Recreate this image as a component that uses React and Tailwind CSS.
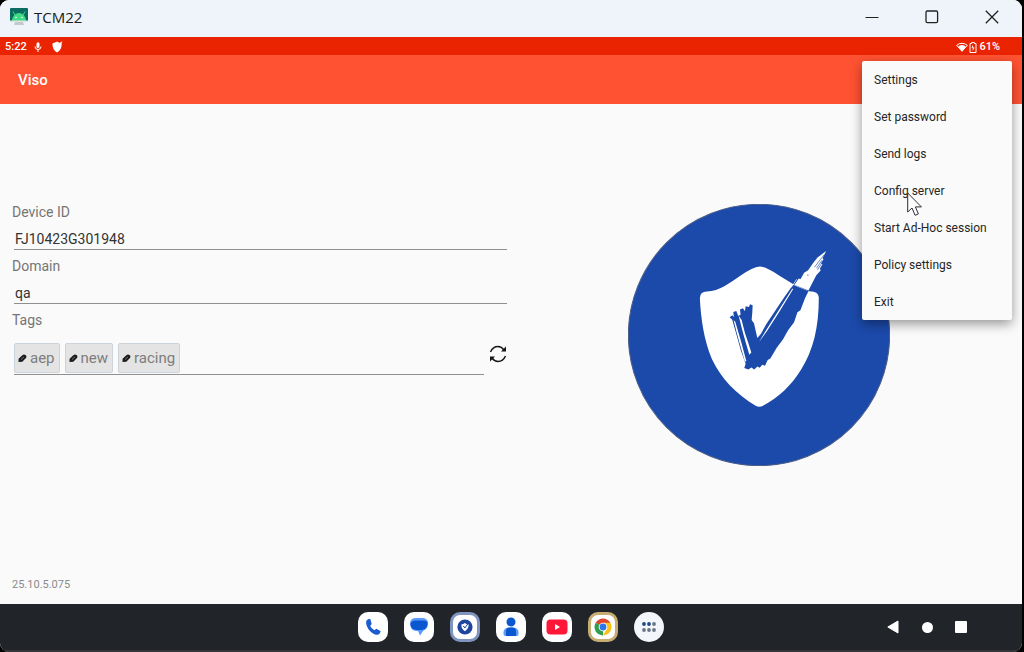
const menuItems = [
  'Settings',
  'Set password',
  'Send logs',
  'Config server',
  'Start Ad-Hoc session',
  'Policy settings',
  'Exit',
];

const tags = ['aep', 'new', 'racing'];

const DeviceIcon = () => (
  <svg width="18" height="18" viewBox="0 0 18 18" aria-hidden="true">
    <path d="M1 0h16a1 1 0 0 1 1 1v12H0V1a1 1 0 0 1 1-1z" fill="#0b6b60" />
    <path d="M2 13c0-4 3-8 7-8s7 4 7 8z" fill="#3ddc84" />
    <path d="M5 7 3 3.500M13 7l2-3.500" stroke="#3ddc84" strokeWidth="1" />
    <circle cx="6" cy="9.500" r="0.8" fill="#fff" />
    <circle cx="12" cy="9.500" r="0.8" fill="#fff" />
    <path d="M0 12.500h18V14H0z" fill="#dfe3e5" />
    <path d="M5 14h8l1 3H4z" fill="#c3c8ca" />
  </svg>
);

const TitleBar = () => (
  <header className="flex h-[37px] items-center justify-between bg-[#eef4f9] pb-[3px] pl-[10px]">
    <div className="flex items-center gap-[6px]">
      <DeviceIcon />
      <h1 className="font-['Open_Sans',sans-serif] text-[15px] leading-5 text-[#1b1b1b]">TCM22</h1>
    </div>
    <div className="flex h-full">
      <button aria-label="Minimize" className="flex w-[60px] items-center justify-center">
        <svg width="14" height="14" viewBox="0 0 14 14"><path d="M0.5 7.5h13" stroke="#222" strokeWidth="1.2" /></svg>
      </button>
      <button aria-label="Maximize" className="flex w-[60px] items-center justify-center">
        <svg width="14" height="14" viewBox="0 0 14 14"><rect x="1" y="1" width="11.6" height="11.6" rx="1.4" fill="none" stroke="#222" strokeWidth="1.3" /></svg>
      </button>
      <button aria-label="Close" className="flex w-[60px] items-center justify-center">
        <svg width="14" height="14" viewBox="0 0 14 14"><path d="M0.8 0.8 13.2 13.2M13.2 0.8 0.8 13.2" stroke="#222" strokeWidth="1.3" /></svg>
      </button>
    </div>
  </header>
);

const StatusBar = () => (
  <div className="flex h-[18px] items-center justify-between bg-[#ea2400] pl-[5px] pr-[22px] pt-[2px] text-[11px] font-medium leading-4 text-white">
    <div className="flex items-center">
      <span>5:22</span>
      <svg className="ml-[7px]" width="8" height="10" viewBox="0 0 8 10" aria-hidden="true">
        <rect x="2.5" y="0.3" width="3" height="5.6" rx="1.5" fill="#fff" />
        <path d="M1 4.5a3 3 0 0 0 6 0M4 7.5V10" stroke="#fff" fill="none" />
      </svg>
      <svg className="ml-[10px]" width="11" height="12" viewBox="0 0 11 12" aria-hidden="true">
        <path d="M0.4 2.5C2.4 2.3 3.6 0.9 5 0.8c1 0 1.8.7 2.8 1.2L10.4 0 9.6 2.4c.3 4-1.500 7.400-4.600 9C2 9.800.2 6.500.4 2.500z" fill="#fff" />
      </svg>
    </div>
    <div className="flex items-center">
      <svg width="12" height="10" viewBox="0 0 12 10" aria-hidden="true">
        <path d="M0.700 3.300a8 8 0 0 1 10.600 0L6 9.300z" fill="none" stroke="#fff" strokeWidth="1" />
        <path d="M2.200 4.600a5.500 5.500 0 0 1 7.600 0L6 9.500z" fill="#fff" />
      </svg>
      <svg className="ml-[1px]" width="8" height="11" viewBox="0 0 8 11" aria-hidden="true">
        <path d="M2.500 1.500V.6h3v.9H7v9H1v-9z" fill="none" stroke="#fff" />
        <path d="M4 3 2.400 5.700h1.300V9l1.900-3.500H4.200z" fill="#fff" />
      </svg>
      <span className="ml-[2px]">61%</span>
    </div>
  </div>
);

const OverflowMenu = () => (
  <div role="menu" className="absolute right-[10px] top-[61px] w-[150px] rounded-[2px] bg-[#fafafa] shadow-[0_4px_12px_rgba(0,0,0,0.4)]">
    {menuItems.map((item) => (
      <button key={item} role="menuitem" className="flex h-[37px] w-full items-center px-3 text-left text-[12px] leading-4 text-[#252525]">
        {item}
      </button>
    ))}
    <svg className="absolute left-[45px] top-[131px]" width="16" height="25" viewBox="0 0 16 25" aria-hidden="true">
      <path d="M0.700 1v19l4.300-4 3.100 7.300 3.300-1.400-3-7h6z" fill="#fdfdfd" stroke="#2b2f36" strokeWidth="1" />
    </svg>
  </div>
);

const Field = ({ id, label, value }) => (
  <div className="mb-[6px]">
    <label htmlFor={id} className="block text-[14px] leading-5 text-[#757575]">{label}</label>
    <div className="pl-[2px]">
      <input
        id={id}
        defaultValue={value}
        className="block h-7 w-full border-b border-[#8f8f8f] pt-[6px] pb-0 pl-[1px] text-[14px] leading-5 text-[#333] outline-none"
      />
    </div>
  </div>
);

const PencilIcon = () => (
  <svg width="9" height="9" viewBox="0 0 9 9" aria-hidden="true">
    <path d="M0.500 8 .6 4.700 4.600.9Q6 .2 7.500 1T8.200 3.700L4.300 7.700z" fill="#1c1c1c" />
    <path d="M3 5.600 6 2.700" stroke="#777" strokeWidth="1" />
  </svg>
);

const TagsField = () => (
  <div>
    <label htmlFor="tags" className="block text-[14px] leading-5 text-[#757575]">Tags</label>
    <div className="mt-[13px] flex items-start pl-[2px]">
      <div className="flex h-8 min-w-0 flex-1 items-start gap-[5px] border-b border-[#8f8f8f]">
        {tags.map((tag) => (
          <button key={tag} className="flex h-[30px] items-center gap-[3px] rounded-[2px] border border-[#cdd4d9] bg-[#e4e4e4] pl-[3px] pr-1 text-[15px] leading-5 text-[#7d7d7d]">
            <PencilIcon />
            {tag}
          </button>
        ))}
        <input id="tags" className="h-[30px] min-w-0 flex-1 outline-none" />
      </div>
      <button aria-label="Refresh tags" className="ml-[5px] mt-[2px]">
        <svg width="18" height="18" viewBox="0 0 18 18" fill="none" stroke="#151515" strokeWidth="1.500">
          <path d="M1.500 7Q4 1.500 9 1.500 12.500 1.500 15 5" />
          <path d="M17 1.500v5h-5z" fill="#151515" stroke="none" />
          <path d="M16.500 11Q14 16.500 9 16.500 5.500 16.500 3 13" />
          <path d="M1 16.500v-5h5z" fill="#151515" stroke="none" />
        </svg>
      </button>
    </div>
  </div>
);

const VisoLogo = () => (
  <svg className="size-[262px]" viewBox="26 28 784 784" role="img" aria-label="Viso">
    <circle cx="418" cy="420" r="391" fill="#1c4aab" stroke="#4a5c86" strokeWidth="3" />
    <path
      d="M262 290C300 289 330 265 362 243Q400 216 420 215Q440 216 478 242L521 268L566 289Q596 288 597 308C597 400 580 465 545 522C515 572 475 608 430 632Q419 638 408 632C350 596 305 552 277 492C253 435 244 370 241 310Q241 291 262 290z"
      fill="#fff"
    />
    <path
      d="M330 367 338 361 343 366 341 351 350 348 356 363 363 359 361 344 370 340 376 349 378 334 388 336 391 328 399 331 398 352 396 375 403 385 413 429 424 416 440 387 465 350 494 306 520 270 566 289 556 309 542 346 533 352 523 382 505 406 490 433 471 458 452 490 444 495 436 512 428 509 420 518 413 514 404 523 395 517 386 523 374 519 378 506 364 467 351 421 338 374z"
      fill="#1c4aab"
    />
    <path d="M342 376 347 380 365 442 380 498 376 500 360 445 351 412zM357 362 366 375 376 414 386 444 395 472 389 479 377 438 368 406z" fill="#fff" />
    <path d="M418 441 440 404 475 349 518 281 520 283 478 352 442 408z" fill="#fff" />
    <path d="M514 278 531 253" stroke="#fff" strokeWidth="2" />
    <path d="M524 270 537 251 542 253 553 234 565 226 579 206 593 188 619 169 608 190 611 193 603 206 608 208 600 222 603 226 589 242 566 287z" fill="#fff" />
    <path d="M612 181 584 217M607 196 590 220M604 208 593 225" stroke="#1c4aab" strokeWidth="2" />
    <circle cx="564" cy="241" r="3" fill="#a9bce0" />
  </svg>
);

const dockTile = 'flex size-[30px] items-center justify-center rounded-[10px]';

const ChromeIcon = () => (
  <svg width="18" height="18" viewBox="0 0 18 18" aria-hidden="true">
    <path d="M9 9 1.640 4.750A8.500 8.500 0 0 1 16.360 4.750z" fill="#e0442f" />
    <path d="M9 9v8.500A8.500 8.500 0 0 1 1.640 4.750z" fill="#2f9e4f" />
    <path d="M9 4.750h7.360A8.500 8.500 0 0 1 9 17.500L12.700 11z" fill="#fbc116" />
    <circle cx="9" cy="9" r="4.300" fill="#fff" />
    <circle cx="9" cy="9" r="3.400" fill="#2f74e8" />
  </svg>
);

const Dock = () => (
  <nav aria-label="Apps" className="flex gap-4">
    <button aria-label="Phone" className={`${dockTile} bg-white`}>
      <svg width="18" height="18" viewBox="0 0 18 18">
        <path d="M4.600 1 3 2Q1.500 3.400 2.600 7.500q2.500 6.500 8.400 9 3 1 4.700-1l1-2.300-4.200-2.500-2.200 1.600Q7.500 10.700 6.200 8l1.500-2L6.300 1z" fill="#1a5bd0" />
      </svg>
    </button>
    <button aria-label="Messages" className={`${dockTile} bg-white`}>
      <svg width="20" height="20" viewBox="0 0 20 20">
        <path d="M7 1h6q6 0 6 5.500Q19 12 14.500 13.500L11 18.500 9 14H7Q1 13 1 6.500 1 1 7 1z" fill="#5c9bfa" />
        <path d="M5.500 3.500h10q3.500.5 3 3.500-.5 5.500-6 6H7.500Q1.500 12.500 1.500 7q.5-3 4-3.500z" fill="#0b57d0" />
      </svg>
    </button>
    <button aria-label="Viso" className={`${dockTile} border-[3px] border-[#8094c0] bg-white`}>
      <svg width="16" height="16" viewBox="0 0 16 16">
        <circle cx="8" cy="8" r="7.600" fill="#1f469f" />
        <path d="M4.300 5.500Q6.500 5 7.800 4q1.500 1 3.900 1.500 0 4-3.700 6.700-3.700-2.200-3.700-6.700z" fill="#fff" />
        <path d="M6.300 6.800 7.800 9 11.500 4" stroke="#1f469f" fill="none" />
      </svg>
    </button>
    <button aria-label="Contacts" className={`${dockTile} bg-white`}>
      <svg width="18" height="20" viewBox="0 0 18 20">
        <circle cx="9" cy="5" r="4.500" fill="#0b57d0" />
        <path d="M1.500 17v-2q.5-4.500 5.500-4.500h4q5 0 5.500 4.500v2q0 2-2 2h-11q-2 0-2-2z" fill="#5c9bfa" />
        <path d="M4 19v-5q0-3.500 4-3.500h2q4 0 4 3.500v5z" fill="#0b57d0" />
      </svg>
    </button>
    <button aria-label="YouTube" className={`${dockTile} bg-white`}>
      <svg width="22" height="16" viewBox="0 0 22 16">
        <rect x="0.500" y="0.500" width="21" height="15" rx="4" fill="#ff1738" />
        <path d="M9 5v6l5-3z" fill="#fff" />
      </svg>
    </button>
    <button aria-label="Chrome" className={`${dockTile} border-[3px] border-[#c8ad73] bg-white`}>
      <ChromeIcon />
    </button>
    <button aria-label="All apps" className="flex size-[30px] items-center justify-center rounded-full bg-[#f3f6fb]">
      <svg width="16" height="12" viewBox="0 0 16 12">
        <circle cx="3" cy="3" r="1.900" fill="#1d4a86" />
        <circle cx="8" cy="3" r="1.900" fill="#1d4a86" />
        <circle cx="13" cy="3" r="1.900" fill="#6b7585" />
        <circle cx="3" cy="9" r="1.900" fill="#6b7585" />
        <circle cx="8" cy="9" r="1.900" fill="#6b7585" />
        <circle cx="13" cy="9" r="1.900" fill="#6b7585" />
      </svg>
    </button>
  </nav>
);

const SystemNav = () => (
  <div className="flex justify-end pr-11">
    <button aria-label="Back" className="flex h-[34px] w-[34px] items-center justify-center">
      <svg width="12" height="14" viewBox="0 0 12 14"><path d="M11 1v12L.8 7z" fill="#fff" stroke="#fff" strokeLinejoin="round" /></svg>
    </button>
    <button aria-label="Home" className="flex h-[34px] w-[34px] items-center justify-center">
      <span className="size-[11px] rounded-full bg-white" />
    </button>
    <button aria-label="Recents" className="flex h-[34px] w-[34px] items-center justify-center">
      <span className="size-[12px] rounded-[1px] bg-white" />
    </button>
  </div>
);

const App = () => {
  return (
    <div className="min-h-screen bg-black pr-[2px] font-[Roboto,sans-serif]">
      <div className="relative flex min-h-screen flex-col overflow-hidden rounded-[9px] bg-[#fafafa]">
        <TitleBar />
        <StatusBar />
        <div className="flex h-[49px] items-center bg-[#ff5232] pl-[18px]">
          <h2 className="text-[15px] font-medium leading-5 text-white">Viso</h2>
        </div>

        <main className="flex flex-1 flex-col">
          <div className="grid flex-1 grid-cols-2">
            <form className="pl-3 pr-1 pt-[98px]">
              <Field id="device-id" label="Device ID" value="FJ10423G301948" />
              <Field id="domain" label="Domain" value="qa" />
              <TagsField />
            </form>
            <div className="flex justify-center pr-4 pt-[100px]">
              <VisoLogo />
            </div>
          </div>
          <p className="pb-[11px] pl-3 text-[11px] leading-4 text-[#8a8a8a]">25.10.5.075</p>
        </main>

        <footer className="grid h-12 grid-cols-[1fr_auto_1fr] items-center border-b-2 border-[#343536] bg-[#212529]">
          <span />
          <Dock />
          <SystemNav />
        </footer>

        <OverflowMenu />
      </div>
    </div>
  );
};

export default App;
